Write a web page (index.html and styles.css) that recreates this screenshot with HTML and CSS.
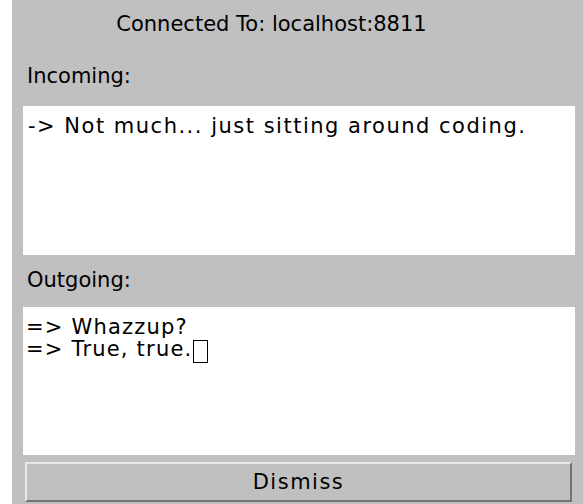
FILE: index.html
```html
<!DOCTYPE html>
<html>
<head>
<meta charset="utf-8">
<link rel="stylesheet" href="styles.css">
</head>
<body>
<div class="panel">
  <div class="status">Connected To: localhost:8811</div>
  <div class="label label-in">Incoming:</div>
  <div class="textbox incoming">
    <div class="line">-&gt; Not much... just sitting around coding.</div>
  </div>
  <div class="label label-out">Outgoing:</div>
  <div class="textbox outgoing">
    <div class="line">=&gt; Whazzup?</div>
    <div class="line">=&gt; True, true.<span class="caret"></span></div>
  </div>
  <button class="dismiss">Dismiss</button>
</div>
</body>
</html>
```
FILE: styles.css
```css
html, body {
  margin: 0;
  padding: 0;
  background: #ffffff;
  width: 583px;
  height: 504px;
  overflow: hidden;
}

.panel {
  margin-left: 12px;
  height: 504px;
  background: #c0c0c0;
  box-sizing: border-box;
  padding: 0 8px 0 11px;
  display: flex;
  flex-direction: column;
  font-family: "DejaVu Sans", sans-serif;
  font-size: 21px;
  line-height: 22px;
  color: #000;
}

.status {
  text-align: center;
  padding-top: 13px;
  padding-right: 55px;
}

.label {
  padding-left: 4px;
}

.label-in {
  margin-top: 30px;
  margin-bottom: 19px;
}

.label-out {
  margin-top: 14px;
  margin-bottom: 16px;
}

.textbox {
  background: #fff;
  padding: 9px 5px 0;
  box-sizing: border-box;
  flex: none;
  letter-spacing: 1.5px;
}

.incoming {
  height: 149px;
}

.outgoing {
  height: 148px;
  padding-left: 3px;
  letter-spacing: 1.2px;
}

.caret {
  display: inline-block;
  width: 13px;
  height: 21px;
  border: 1px solid #000;
  vertical-align: -7px;
  margin-left: 1px;
  letter-spacing: 0;
}

.dismiss {
  flex: none;
  margin: 7px 3px 2px 2px;
  height: 40px;
  background: #c0c0c0;
  border-style: solid;
  border-width: 2px;
  border-color: #e8e8e8 #747474 #747474 #e8e8e8;
  font-family: "DejaVu Sans", sans-serif;
  font-size: 21px;
  letter-spacing: 1.5px;
  color: #000;
  padding: 0;
}
```
